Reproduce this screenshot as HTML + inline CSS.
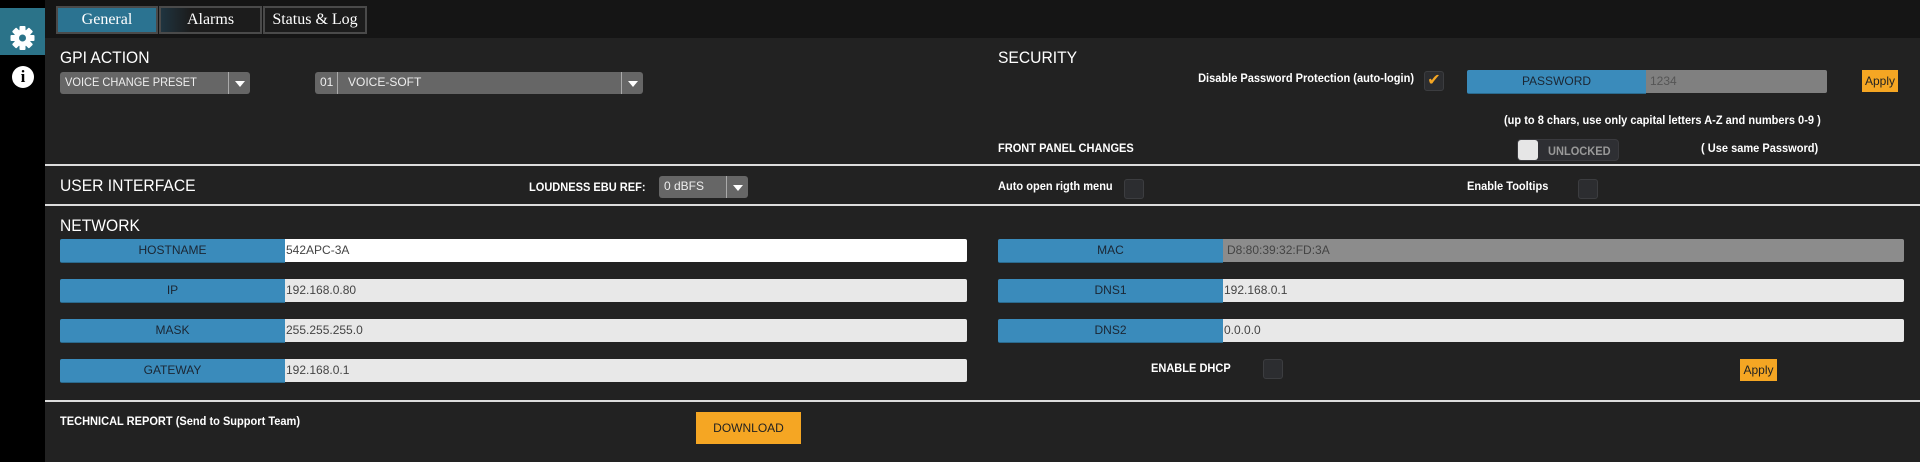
<!DOCTYPE html>
<html><head><meta charset="utf-8"><style>
*{box-sizing:border-box;margin:0;padding:0}
body{width:1920px;height:462px;background:#222;overflow:hidden;position:relative;font-family:"Liberation Sans Narrow","Liberation Sans",sans-serif;color:#fff;font-size:12px}
.a{position:absolute}
.t{transform:scaleX(.92);transform-origin:left center;white-space:nowrap}
.side{left:0;top:0;width:45px;height:462px;background:#000}
.gear{left:0;top:8px;width:45px;height:47px;background:#2b7389}
.topbar{left:45px;top:0;width:1875px;height:38px;background:#151515}
.tab{top:6px;height:28px;border:2px solid #4a4a4a;font-family:"Liberation Serif",serif;font-size:16px;text-align:center;line-height:23px;color:#fff;background:#1c1c1c}
.h{font-size:17px;color:#fff}
.sel{background:#666;border-radius:3px;color:#eee;font-size:12px;line-height:21px;padding-left:5px}
.arr{position:absolute;right:0;top:0;width:22px;height:100%;border-left:1px solid #aaa}
.arr:after{content:"";position:absolute;left:6px;top:9px;border-left:5px solid transparent;border-right:5px solid transparent;border-top:6px solid #fff}
.hr{left:45px;width:1875px;height:2px;background:#ddd}
.lab{background:#3a8bbb;color:#1b2633;text-align:center;line-height:23px;font-size:12px;border-radius:2px 0 0 2px;border-bottom:1px solid #2a6a8e}
.inp{background:#e8e8e8;color:#444;line-height:23px;font-size:12px;padding-left:1px;border-radius:0 2px 2px 0}
.cb{width:20px;height:20px;background:#2c2d30;border:1px solid #3c3d40;border-radius:3px}
.org{background:#f5a623;color:#222;text-align:center;font-size:12px}
b{font-weight:bold}
</style></head><body>
<div class="a side"></div>
<div class="a gear"><svg width="45" height="47" viewBox="0 0 45 47"><g transform="translate(22.5,30)" fill="#fff"><rect x="-3" y="-12" width="6" height="24" rx="1"/><rect x="-3" y="-12" width="6" height="24" rx="1" transform="rotate(45)"/><rect x="-3" y="-12" width="6" height="24" rx="1" transform="rotate(90)"/><rect x="-3" y="-12" width="6" height="24" rx="1" transform="rotate(135)"/><circle r="8.5"/><circle r="3.5" fill="#2b7389"/></g></svg></div>
<div class="a" style="left:12px;top:66px;width:22px;height:22px;border-radius:50%;background:#fff;color:#000;font-family:'Liberation Serif',serif;font-weight:bold;font-size:17px;text-align:center;line-height:22px">i</div>
<div class="a topbar"></div>
<div class="a tab" style="left:56px;width:102px;background:#2b7391">General</div>
<div class="a tab" style="left:159px;width:103px;background:linear-gradient(90deg,#1f3440,#1c1c1c 30%)">Alarms</div>
<div class="a tab" style="left:263px;width:104px">Status &amp; Log</div>

<div class="a h t" style="left:60px;top:48px">GPI ACTION</div>
<div class="a sel" style="left:60px;top:72px;width:190px;height:22px"><span class="t" style="display:inline-block">VOICE CHANGE PRESET</span><div class="arr"></div></div>
<div class="a sel" style="left:315px;top:72px;width:328px;height:22px">01<span style="position:absolute;left:22px;top:0;bottom:0;border-left:1px solid #aaa;padding-left:10px">VOICE-SOFT</span><div class="arr"></div></div>

<div class="a h t" style="left:998px;top:48px">SECURITY</div>
<div class="a t" style="left:1150px;width:264px;text-align:right;top:71px;transform-origin:right center"><b>Disable Password Protection (auto-login)</b></div>
<div class="a cb" style="left:1424px;top:71px;color:#f5a623;font-size:16px;line-height:18px;text-align:center">✔</div>
<div class="a lab" style="left:1467px;top:70px;width:179px">PASSWORD</div>
<div class="a inp" style="left:1646px;top:70px;width:181px;background:#808080;color:#555;padding-left:4px">1234</div>
<div class="a org" style="left:1862px;top:70px;width:36px;height:22px;line-height:22px">Apply</div>
<div class="a t" style="left:1504px;top:113px"><b>(up to 8 chars, use only capital letters A-Z and numbers 0-9 )</b></div>
<div class="a t" style="left:998px;top:141px"><b>FRONT PANEL CHANGES</b></div>
<div class="a" style="left:1517px;top:139px;width:102px;height:22px;background:#2e2f33;border-radius:4px;border:1px solid #3a3a3e"></div>
<div class="a" style="left:1518px;top:140px;width:20px;height:20px;background:#e6e6e6;border-radius:3px"></div>
<div class="a t" style="left:1548px;top:144px;color:#999;font-weight:bold;font-size:12px">UNLOCKED</div>
<div class="a t" style="left:1701px;top:141px"><b>( Use same Password)</b></div>

<div class="a hr" style="top:164px"></div>
<div class="a h t" style="left:60px;top:176px">USER INTERFACE</div>
<div class="a t" style="left:529px;top:180px"><b>LOUDNESS EBU REF:</b></div>
<div class="a sel" style="left:659px;top:176px;width:89px;height:22px">0 dBFS<div class="arr"></div></div>
<div class="a t" style="left:998px;top:179px"><b>Auto open rigth menu</b></div>
<div class="a cb" style="left:1124px;top:179px"></div>
<div class="a t" style="left:1467px;top:179px"><b>Enable Tooltips</b></div>
<div class="a cb" style="left:1578px;top:179px"></div>
<div class="a hr" style="top:204px"></div>

<div class="a h t" style="left:60px;top:216px">NETWORK</div>
<div class="a lab" style="left:60px;top:239px;width:225px">HOSTNAME</div>
<div class="a inp" style="left:285px;top:239px;width:682px;background:#fff">542APC-3A</div>
<div class="a lab" style="left:60px;top:279px;width:225px">IP</div>
<div class="a inp" style="left:285px;top:279px;width:682px">192.168.0.80</div>
<div class="a lab" style="left:60px;top:319px;width:225px">MASK</div>
<div class="a inp" style="left:285px;top:319px;width:682px">255.255.255.0</div>
<div class="a lab" style="left:60px;top:359px;width:225px">GATEWAY</div>
<div class="a inp" style="left:285px;top:359px;width:682px">192.168.0.1</div>

<div class="a lab" style="left:998px;top:239px;width:225px">MAC</div>
<div class="a inp" style="left:1223px;top:239px;width:681px;background:#8c8c8c;padding-left:4px">D8:80:39:32:FD:3A</div>
<div class="a lab" style="left:998px;top:279px;width:225px">DNS1</div>
<div class="a inp" style="left:1223px;top:279px;width:681px">192.168.0.1</div>
<div class="a lab" style="left:998px;top:319px;width:225px">DNS2</div>
<div class="a inp" style="left:1223px;top:319px;width:681px">0.0.0.0</div>
<div class="a t" style="left:1151px;top:361px"><b>ENABLE DHCP</b></div>
<div class="a cb" style="left:1263px;top:359px"></div>
<div class="a org" style="left:1740px;top:359px;width:37px;height:22px;line-height:22px">Apply</div>

<div class="a hr" style="top:400px"></div>
<div class="a t" style="left:60px;top:414px"><b>TECHNICAL REPORT (Send to Support Team)</b></div>
<div class="a org" style="left:696px;top:412px;width:105px;height:32px;line-height:32px">DOWNLOAD</div>
</body></html>
